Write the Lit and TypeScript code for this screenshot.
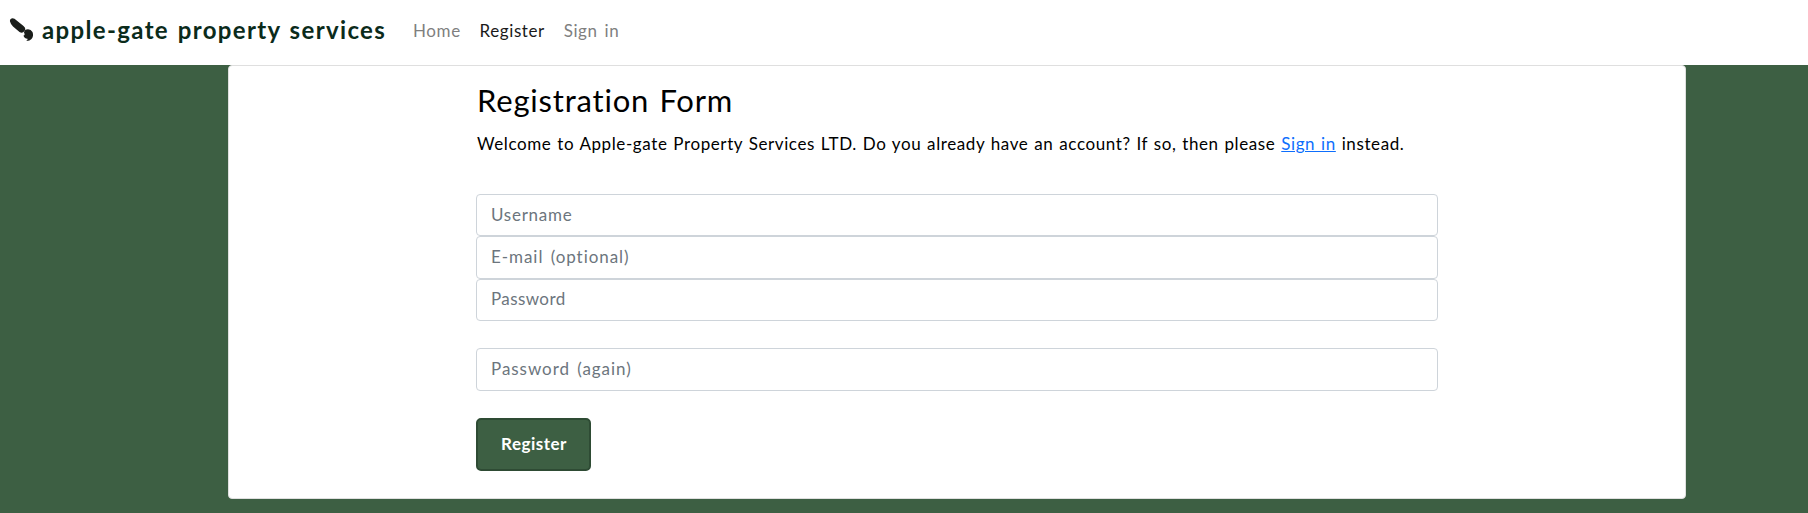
import { LitElement, html, css } from "lit";
import { customElement, property } from "lit/decorators.js";

@customElement("form-field")
class FormField extends LitElement {
  @property() label = "";
  @property() type = "text";
  static styles = css`
    :host { display: block; }
    .input {
      display: block; box-sizing: border-box; width: 100%; height: 42.4px;
      padding: 5px 14px 7px; border: 1px solid #ced4da; border-radius: 4px;
      background: #fff; color: #212529; outline: none;
      font: 400 17px/28px Lato, sans-serif;
      letter-spacing: var(--tracking, 0.75px); word-spacing: 2px;
    }
    .input::placeholder { color: #6c757d; opacity: 1; }
  `;
  render() {
    return html`<input class="input" type=${this.type} placeholder=${this.label} aria-label=${this.label} />`;
  }
}

@customElement("app-root")
class AppRoot extends LitElement {
  static styles = css`
    :host {
      display: block; box-sizing: border-box; min-height: 100vh;
      background: #3d5f43; color: #000; font-family: Lato, sans-serif;
    }
    .nav { display: flex; align-items: center; box-sizing: border-box; height: 65px; padding: 0 0 5px 9px; background: #fff; }
    .logo { display: block; width: 25px; height: 25px; }
    .brand { margin-left: 8px; width: 371px; color: #0b2b1b; font-size: 24px; font-weight: 700; line-height: 32px; letter-spacing: 1.35px; word-spacing: 1.5px; white-space: nowrap; }
    .link { color: #7f7f7f; font-size: 17px; line-height: 26px; padding-top: 2px; text-decoration: none; margin-right: 18.8px; letter-spacing: 0.6px; word-spacing: 2px; }
    .link.active { color: #1a1a1a; }
    .card { box-sizing: border-box; width: 1458px; height: 434px; margin: 0 auto 0 228px; padding: 15px 247px 0; background: #fff; border: 1px solid #dfdfdf; border-radius: 4px; }
    .title { margin: 0 0 0 1px; font-size: 31px; font-weight: 400; line-height: 38px; letter-spacing: 0.8px; word-spacing: 1.5px; }
    .intro { margin: 9px 0 35px 1px; font-size: 17px; line-height: 31px; letter-spacing: 0.6px; word-spacing: 0.9px; white-space: nowrap; }
    .intro a { color: #0d6efd; }
    .tight { --tracking: 0.4px; }
    .wide { --tracking: 0.95px; }
    .again { margin-top: 27px; }
    .submit { display: block; box-sizing: border-box; width: 115px; height: 53px; margin-top: 27px; padding: 0 0 2px 1px; border: 2px solid #2e4b34; border-radius: 5px; background: #3d5f43; color: #fff; font: 700 17px Lato, sans-serif; letter-spacing: 0.5px; }
  `;
  render() {
    return html`
      <nav class="nav">
        <svg class="logo" viewBox="0 0 25 25" fill="#1b1e1b"><path d="M1 3.500C.5 1 3 -.8 5.500 .8L14.500 8Q17.500 10.500 15.500 13Q13.500 15.800 10.500 14L4 8.500Q1.800 6.500 1 3.500Z"/><path d="M15 14.500Q15.500 11.300 19 11.300Q22 11.500 23.500 14Q25 18 22.500 21Q20.500 23.200 17.200 23Q19 22 18.500 20.800Q15 20.500 14.500 17.500Q16.500 17 15 14.500Z"/></svg>
        <span class="brand">apple-gate property services</span>
        <a class="link" href="#">Home</a><a class="link active" href="#">Register</a><a class="link" href="#">Sign in</a>
      </nav>
      <main class="card">
        <h1 class="title">Registration Form</h1>
        <p class="intro">Welcome to Apple-gate Property Services LTD. Do you already have an account? If so, then please <a href="#">Sign in</a> instead.</p>
        <form-field label="Username"></form-field>
        <form-field class="wide" label="E-mail (optional)"></form-field>
        <form-field class="tight" label="Password" type="password"></form-field>
        <form-field class="again wide" label="Password (again)" type="password"></form-field>
        <button class="submit" type="button">Register</button>
      </main>`;
  }
}
